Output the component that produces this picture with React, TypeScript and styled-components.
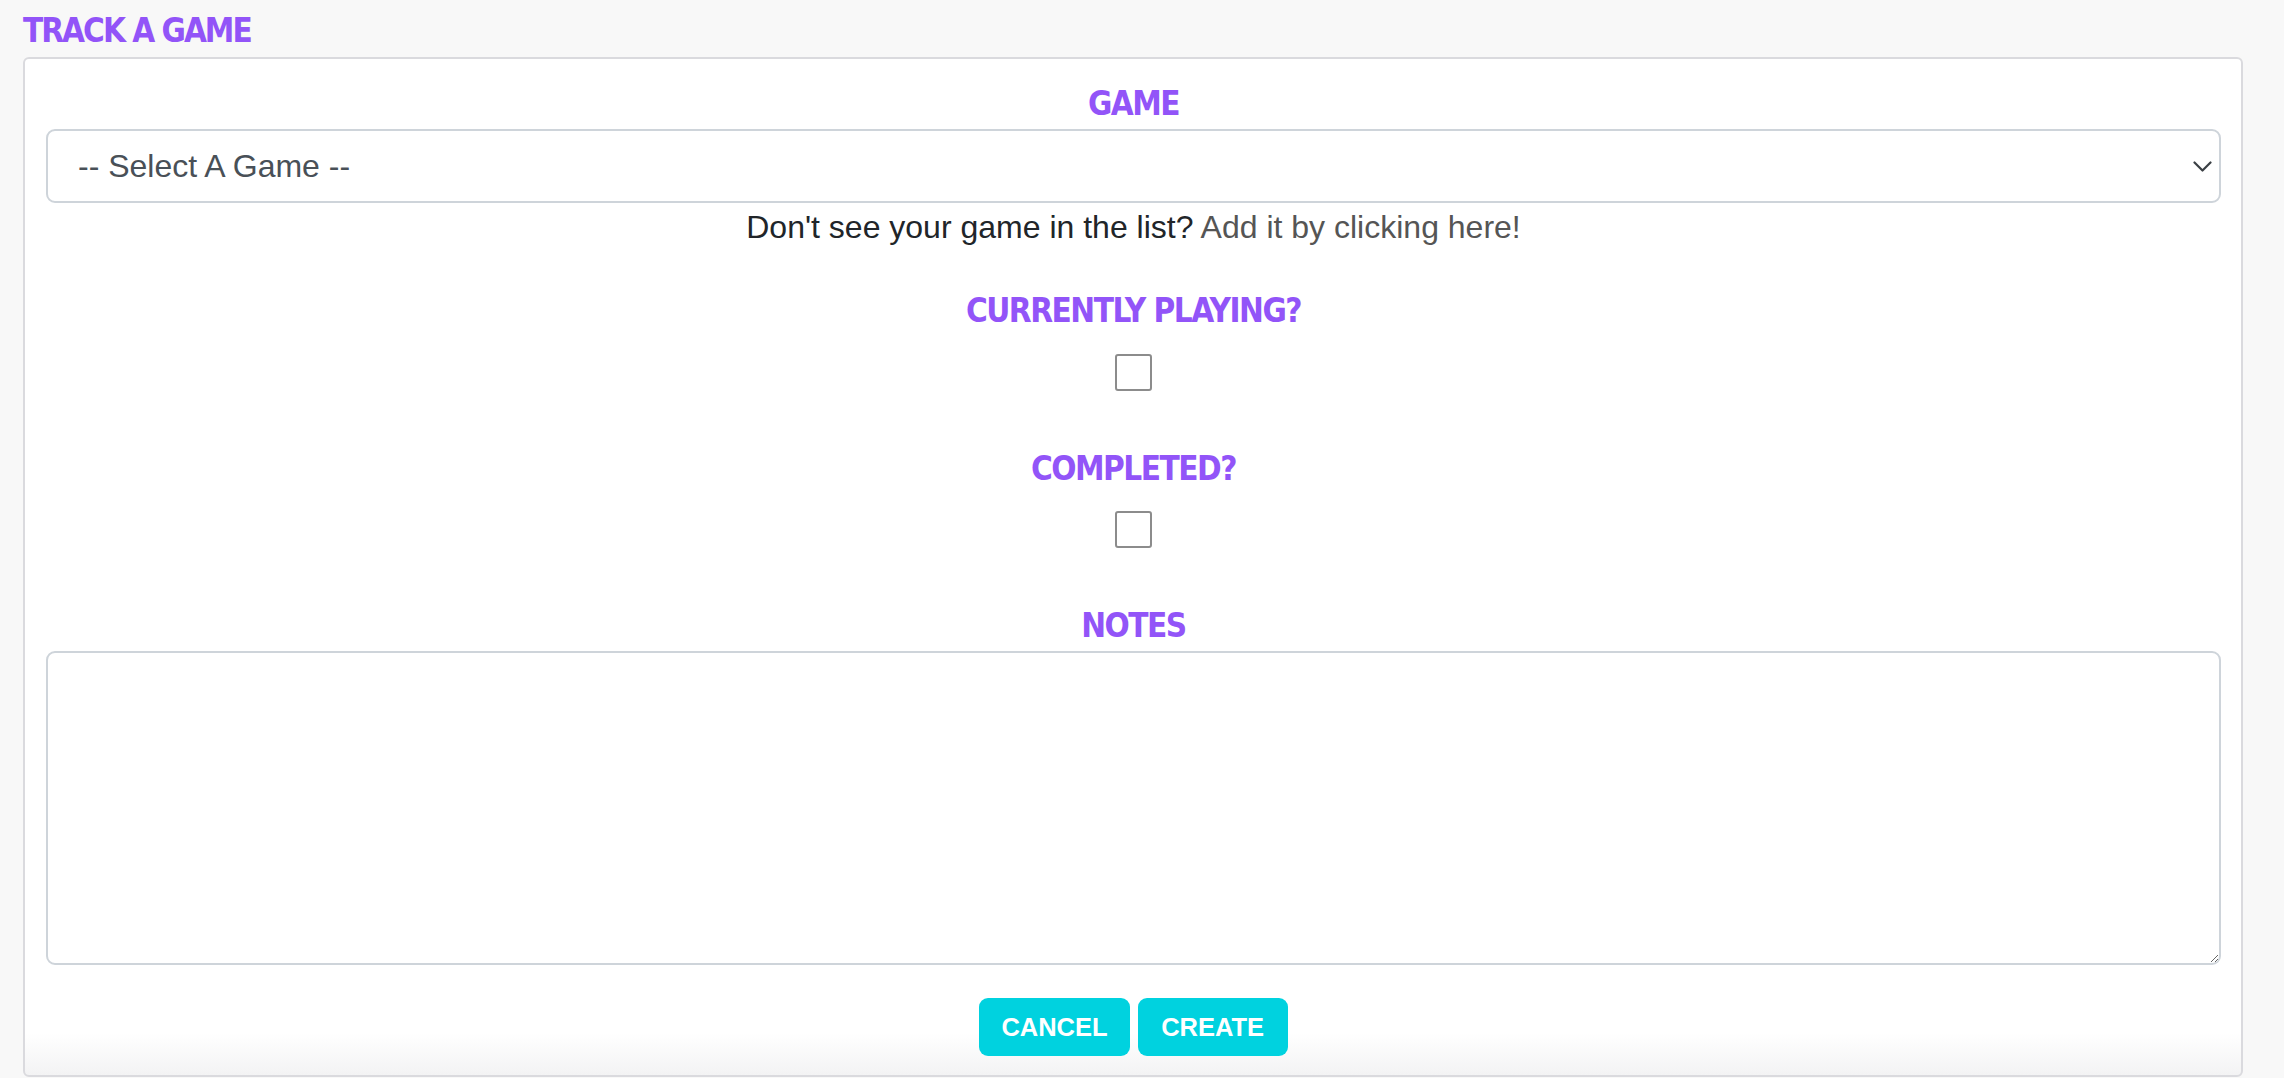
import React from "react";
import styled, { createGlobalStyle } from "styled-components";

const GlobalStyle = createGlobalStyle`
  html, body {
    margin: 0;
    padding: 0;
    background: #f8f8f8;
  }
  body {
    font-family: "Liberation Sans", Arial, sans-serif;
    color: #212529;
  }
  * { box-sizing: border-box; }
`;

const Page = styled.div`
  padding: 11px 41px 0 23px;
`;

const PageTitle = styled.h1`
  margin: 0 0 6px 0;
  font-family: "DejaVu Sans Condensed", "Liberation Sans", sans-serif;
  font-weight: 700;
  font-size: 33px;
  line-height: 40px;
  color: #9254f8;
  letter-spacing: -2px;
`;

const Card = styled.form`
  display: flex;
  flex-direction: column;
  align-items: stretch;
  border: 2px solid #dadade;
  border-radius: 6px;
  padding: 25px 20px 19px 21px;
  background: linear-gradient(to bottom, #ffffff calc(100% - 42px), #f3f3f4 100%);
`;

const Label = styled.label<{ $gap?: number }>`
  display: block;
  text-align: center;
  margin-top: ${(p) => p.$gap ?? 0}px;
  font-family: "DejaVu Sans Condensed", "Liberation Sans", sans-serif;
  font-weight: 700;
  font-size: 33px;
  line-height: 40px;
  color: #9254f8;
  letter-spacing: -1.5px;
`;

const SelectWrap = styled.div`
  position: relative;
  margin-top: 5px;
`;

const Select = styled.select`
  display: block;
  width: 100%;
  height: 74px;
  appearance: none;
  -webkit-appearance: none;
  background: #fff;
  border: 2px solid #ced4da;
  border-radius: 9px;
  padding: 0 60px 0 30px;
  font-family: "Liberation Sans", Arial, sans-serif;
  font-size: 32px;
  color: #495057;
  outline: none;
`;

const Chevron = styled.svg`
  position: absolute;
  right: 9px;
  top: 50%;
  width: 19px;
  height: 12px;
  margin-top: -5px;
  pointer-events: none;
`;

const HelpText = styled.p`
  margin: 0;
  text-align: center;
  font-size: 32px;
  line-height: 48px;
  color: #212529;
`;

const HelpLink = styled.a`
  color: #555555;
  text-decoration: none;
  cursor: pointer;
`;

const CheckRow = styled.div<{ $gap: number }>`
  display: flex;
  justify-content: center;
  margin-top: ${(p) => p.$gap}px;
`;

const Checkbox = styled.input.attrs({ type: "checkbox" })`
  appearance: none;
  -webkit-appearance: none;
  margin: 0;
  width: 37px;
  height: 37px;
  border: 2px solid #8c8c8c;
  border-radius: 3px;
  background: #fff;
`;

const NotesArea = styled.textarea`
  display: block;
  width: 100%;
  height: 314px;
  margin-top: 5px;
  border: 2px solid #ced4da;
  border-radius: 9px;
  background: #fff;
  font-family: "Liberation Sans", Arial, sans-serif;
  font-size: 32px;
  color: #495057;
  padding: 12px 24px;
  outline: none;
`;

const ButtonRow = styled.div`
  display: flex;
  justify-content: center;
  gap: 8px;
  margin-top: 33px;
`;

const ActionButton = styled.button`
  display: inline-flex;
  align-items: center;
  justify-content: center;
  height: 58px;
  padding: 0 22px;
  min-width: 150px;
  border: none;
  border-radius: 9px;
  background: #00d2df;
  color: #ffffff;
  font-family: "Liberation Sans", Arial, sans-serif;
  font-weight: 700;
  font-size: 25.5px;
  cursor: pointer;
`;

export default function App() {
  return (
    <>
      <GlobalStyle />
      <Page>
        <PageTitle>TRACK A GAME</PageTitle>
        <Card onSubmit={(e) => e.preventDefault()}>
          <Label htmlFor="game">GAME</Label>
          <SelectWrap>
            <Select id="game" defaultValue="">
              <option value="">-- Select A Game --</option>
            </Select>
            <Chevron viewBox="0 0 19 12" fill="none">
              <polyline
                points="1.5,1.5 9.5,9.5 17.5,1.5"
                stroke="#3a3f44"
                strokeWidth="2.2"
                strokeLinecap="round"
                strokeLinejoin="round"
              />
            </Chevron>
          </SelectWrap>
          <HelpText>
            Don't see your game in the list? <HelpLink>Add it by clicking here!</HelpLink>
          </HelpText>

          <Label $gap={40} htmlFor="playing">CURRENTLY PLAYING?</Label>
          <CheckRow $gap={23}>
            <Checkbox id="playing" />
          </CheckRow>

          <Label $gap={58} htmlFor="completed">COMPLETED?</Label>
          <CheckRow $gap={22}>
            <Checkbox id="completed" />
          </CheckRow>

          <Label $gap={58} htmlFor="notes">NOTES</Label>
          <NotesArea id="notes" />

          <ButtonRow>
            <ActionButton type="button">CANCEL</ActionButton>
            <ActionButton type="submit">CREATE</ActionButton>
          </ButtonRow>
        </Card>
      </Page>
    </>
  );
}
